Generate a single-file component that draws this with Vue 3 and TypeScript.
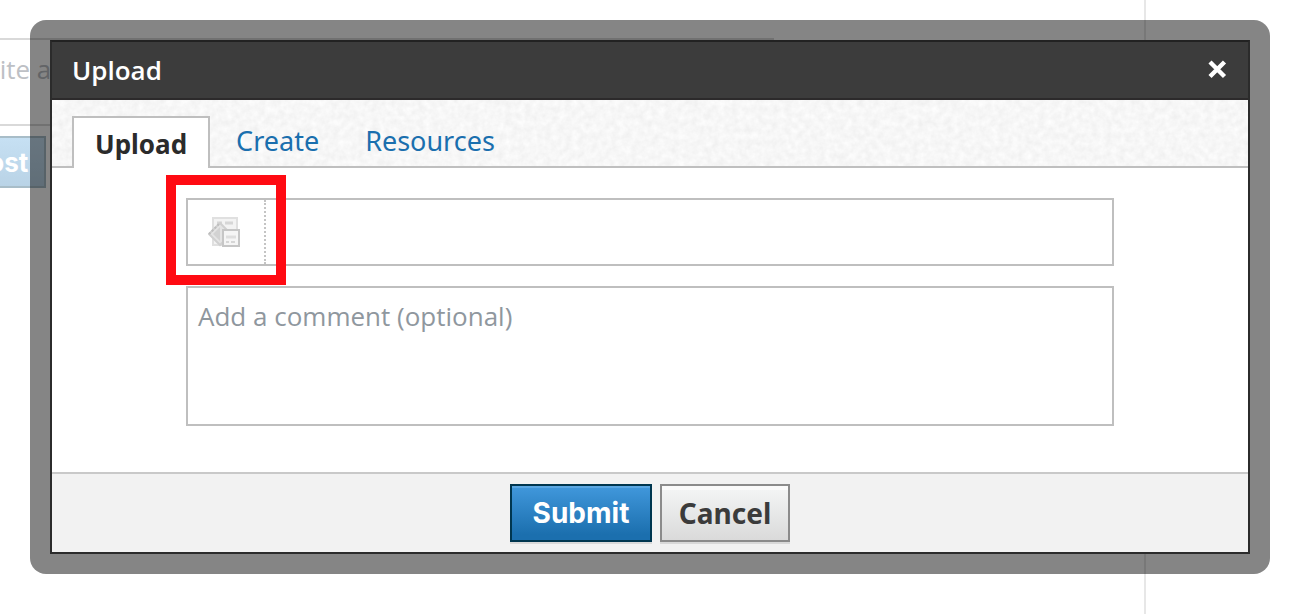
<script setup lang="ts">
import { ref } from 'vue'

const tabs: string[] = ['Upload', 'Create', 'Resources']
const activeTab = ref('Upload')
const comment = ref('')
</script>

<template>
  <div class="page">
    <main class="feed">
      <div class="composer">
        <div class="draft">Write a</div>
        <button class="post" type="button" tabindex="-1">Post</button>
      </div>
    </main>

    <div class="overlay">
      <section class="dialog" role="dialog" aria-labelledby="dialog-title">
        <header class="titlebar">
          <h1 id="dialog-title">Upload</h1>
          <button class="close" type="button" aria-label="Close">
            <svg width="20" height="20" viewBox="0 0 20 20" aria-hidden="true">
              <path d="M2 2 16.500 16.500M16.500 2 2 16.500" stroke="#fff" stroke-width="4.4" />
            </svg>
          </button>
        </header>

        <nav class="tabs">
          <svg class="texture" aria-hidden="true">
            <filter id="paper" x="0" y="0" width="100%" height="100%" color-interpolation-filters="sRGB">
              <feTurbulence type="fractalNoise" baseFrequency="0.15" numOctaves="3" seed="8" />
              <feColorMatrix
                values="0.07 0 0 0 0.932  0.07 0 0 0 0.932  0.07 0 0 0 0.932  0 0 0 0 1"
              />
            </filter>
            <rect width="100%" height="100%" filter="url(#paper)" />
          </svg>
          <button
            v-for="tab in tabs"
            :key="tab"
            type="button"
            class="tab"
            :class="{ active: tab === activeTab }"
            @click="activeTab = tab"
          >
            {{ tab }}
          </button>
        </nav>

        <form id="upload-form" class="body" @submit.prevent>
          <div class="file-field">
            <button class="browse" type="button" aria-label="Attach file">
              <svg width="32" height="32" viewBox="0 0 32 32" aria-hidden="true">
                <rect x="5" y="2" width="24" height="27" fill="#f3f3f3" stroke="#e0e0e0" stroke-width="2" />
                <path d="M9 7h5M17 7h8" stroke="#d6d6d6" stroke-width="3" />
                <path d="M1 18 12 7 23 18 12 29Z" fill="#e4e4e4" stroke="#d0d0d0" stroke-width="2" />
                <path d="M5 18 12 11v14Z" fill="#d2d2d2" />
                <path d="M1 18 12 7" stroke="#bdbdbd" stroke-width="2" stroke-dasharray="2 2" />
                <rect x="15" y="14" width="16" height="16" fill="#f5f5f5" stroke="#c6c6c6" stroke-width="2" />
                <path d="M18 21h10" stroke="#dedede" stroke-width="3" />
                <path d="M18 26h3M23 26h4" stroke="#d6d6d6" stroke-width="2" />
              </svg>
            </button>
            <div class="highlight"></div>
          </div>
          <textarea v-model="comment" aria-label="Comment" placeholder="Add a comment (optional)"></textarea>
        </form>

        <footer class="actions">
          <button class="submit" type="submit" form="upload-form">Submit</button>
          <button class="cancel" type="button">Cancel</button>
        </footer>
      </section>
    </div>
  </div>
</template>

<style>
body {
  margin: 0;
  background: #fff;
}
</style>

<style scoped>
* {
  box-sizing: border-box;
}

button {
  margin: 0;
  padding: 0;
  border: 0;
  background: none;
  font-family: inherit;
  cursor: pointer;
}

.page {
  position: relative;
  min-height: 100vh;
  overflow: hidden;
  font-family: 'Open Sans', 'Noto Sans', sans-serif;
}

.feed {
  width: calc(100% - 158px);
  min-height: 100vh;
  padding-top: 38px;
  border-right: 2px solid #e7e7e7;
}

.composer {
  display: flex;
  flex-direction: column;
  align-items: flex-start;
  gap: 10px;
  margin-left: -60px;
}

.draft {
  width: 834px;
  height: 88px;
  padding: 10px 0 0 23px;
  border: 2px solid #d9d9d9;
  color: #bdc0c5;
  font-size: 26px;
  line-height: 38px;
}

.post {
  width: 106px;
  height: 52px;
  padding-left: 14px;
  border: 2px solid #a8bdc8;
  background: linear-gradient(#c6e0f3, #b9d3e6);
  color: #fff;
  font-family: Inter, sans-serif;
  font-size: 26px;
  font-weight: 700;
}

.overlay {
  position: absolute;
  top: 20px;
  right: 34px;
  left: 30px;
  padding: 20px;
  border-radius: 16px;
  background: rgba(0, 0, 0, 0.48);
}

.dialog {
  border: 2px solid #2b2b2b;
  border-top-color: #222;
  background: #fff;
}

.titlebar {
  display: flex;
  align-items: center;
  justify-content: space-between;
  height: 58px;
  padding: 0 20px;
  border-bottom: 2px solid #2c2a2b;
  background: #3c3c3c;
}

h1 {
  margin: 0;
  color: #fff;
  font-size: 26px;
  font-weight: 600;
  line-height: 56px;
}

.close {
  display: flex;
}

.tabs {
  position: relative;
  display: flex;
  align-items: flex-end;
  height: 68px;
  padding: 0 20px;
  border-bottom: 2px solid #bfbfbf;
}

.texture {
  position: absolute;
  inset: 0;
  width: 100%;
  height: 100%;
}

.tab {
  position: relative;
  height: 50px;
  padding: 0 20px;
  margin-left: 6px;
  color: #1a6fae;
  font-family: 'Noto Sans', sans-serif;
  font-size: 27px;
  line-height: 48px;
}

.tab.active {
  height: 52px;
  padding: 0 21px;
  margin: 0 0 -2px;
  border: 2px solid #bfbfbf;
  border-bottom: 0;
  background: #fff;
  color: #2b2b2b;
  font-size: 26px;
  font-weight: 700;
  line-height: 52px;
}

.body {
  display: flex;
  flex-direction: column;
  gap: 20px;
  padding: 30px 134px 46px;
}

.file-field {
  position: relative;
  height: 68px;
  border: 2px solid #bfbfbf;
}

.browse {
  display: flex;
  align-items: center;
  width: 78px;
  height: 100%;
  padding-left: 20px;
  border-right: 2px dotted #c4c4c4;
}

.highlight {
  position: absolute;
  top: -25px;
  left: -22px;
  width: 120px;
  height: 110px;
  border: 10px solid #ff0a12;
  pointer-events: none;
}

textarea {
  display: block;
  width: 100%;
  height: 140px;
  padding: 10px;
  border: 2px solid #bfbfbf;
  border-radius: 0;
  outline: none;
  resize: none;
  font-family: inherit;
  font-size: 26px;
  line-height: 36px;
}

textarea::placeholder {
  color: #8f979e;
  opacity: 1;
}

.actions {
  display: flex;
  justify-content: center;
  gap: 8px;
  padding: 10px;
  border-top: 2px solid #c9c9c9;
  background: #f2f2f2;
}

.submit,
.cancel {
  height: 58px;
  font-size: 28px;
  font-weight: 700;
}

.submit {
  width: 142px;
  border: 2px solid #00364f;
  background: linear-gradient(#4198dc, #1b6fae 90%);
  color: #fff;
  font-family: Inter, sans-serif;
  box-shadow: inset 0 2px 0 #5ba7e2, 0 2px 0 #d9d9d9;
}

.cancel {
  width: 130px;
  border: 2px solid #8b8b8b;
  background: linear-gradient(#f5f6f6, #dadada);
  color: #3b3b3b;
  font-family: 'Noto Sans', sans-serif;
  box-shadow: inset 0 4px 0 #fafafa, 0 2px 0 #d9d9d9;
}
</style>
